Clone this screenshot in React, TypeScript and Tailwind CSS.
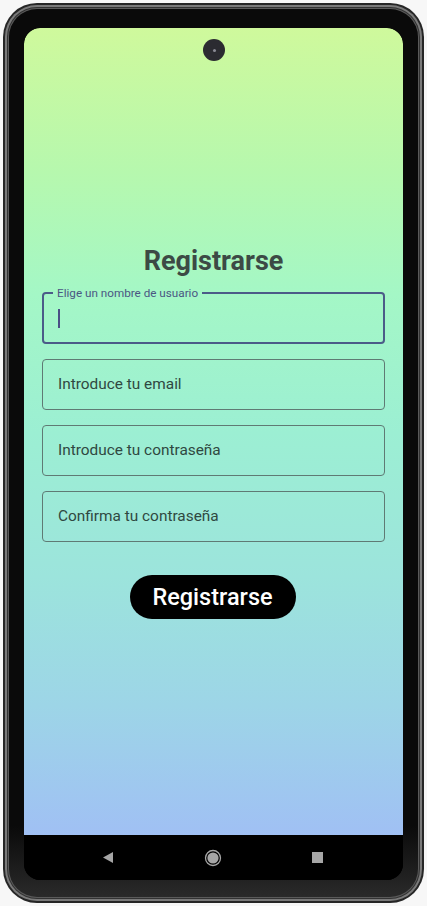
import React from "react";

export default function App() {
  return (
    <div className="w-[427px] h-[906px] bg-[#f7f7f7] p-[3px] overflow-hidden" style={{ fontFamily: "Roboto, 'Noto Sans', sans-serif" }}>
      {/* phone outer rim */}
      <div className="w-[421px] h-[900px] rounded-[34px] bg-[#262626] p-[2px]">
        <div className="w-full h-full rounded-[32px] bg-[#7a7a7a] p-[2px]">
          <div className="w-full h-full rounded-[30px] bg-[#333333] p-[1px]">
            <div className="w-full h-full rounded-[29px] bg-[#5a5a5a] p-[1px]">
              <div className="w-full h-full rounded-[28px] bg-[linear-gradient(180deg,#0a0a0a_0%,#0a0a0a_92%,#2a2a2a_100%)] pt-[19px] px-[15px] pb-[17px]">
                {/* screen */}
                <div className="w-[379px] h-[852px] rounded-[16px] overflow-hidden flex flex-col bg-black">
                  <div className="relative h-[807px] rounded-t-[16px] bg-[linear-gradient(180deg,#cff99c_0%,#b6f8ae_18%,#a4f7c6_33%,#9cefd3_50%,#9ce4dc_68%,#9dd5e7_84%,#a0c0f4_100%)] flex flex-col items-center pt-[217px] px-[18px]">
                    {/* camera */}
                    <div className="absolute top-[11px] left-[179px] w-[22px] h-[22px] rounded-full bg-[#2b2b31] flex items-center justify-center">
                      <div className="w-[3px] h-[3px] rounded-full bg-[#8a8a95]" />
                    </div>
                    <h1 className="text-[27px] leading-[32px] font-bold text-[#3c4a45]">Registrarse</h1>
                    <div className="w-full flex flex-col gap-[15px] mt-[10px]">
                      <fieldset className="h-[57px] border-2 border-[#4b5b88] rounded-[4px] px-[14px]">
                        <legend className="ml-[-5px] px-[4px] text-[11.7px] leading-[12px] text-[#4a5683]">Elige un nombre de usuario</legend>
                        <div className="h-[39px] flex items-center">
                          <div className="w-[2px] h-[19px] bg-[#4a4f85]" />
                        </div>
                      </fieldset>
                      <div className="h-[51px] border border-[#5f7a74] rounded-[4px] flex items-center px-[15px] text-[15.4px] text-[#2f4841]">Introduce tu email</div>
                      <div className="h-[51px] border border-[#5f7a74] rounded-[4px] flex items-center px-[15px] text-[15.4px] text-[#2f4841]">Introduce tu contraseña</div>
                      <div className="h-[51px] border border-[#5f7a74] rounded-[4px] flex items-center px-[15px] text-[15.4px] text-[#2f4841]">Confirma tu contraseña</div>
                    </div>
                    <button className="mt-[33px] ml-[-2px] w-[166px] h-[44px] rounded-full bg-black text-white text-[23.5px] font-medium leading-none pt-[2px]">Registrarse</button>
                  </div>
                  {/* nav bar */}
                  <div className="h-[45px] bg-black flex items-center">
                    <div className="w-full flex items-center justify-between pl-[78px] pr-[80px]">
                      <svg width="12" height="13" viewBox="0 0 12 13"><path d="M11 1 L1 6.5 L11 12 Z" fill="#a6a6a6" /></svg>
                      <svg width="18" height="18" viewBox="0 0 18 18"><circle cx="9" cy="9" r="7.5" fill="none" stroke="#a6a6a6" strokeWidth="1.3" /><circle cx="9" cy="9" r="5.6" fill="#a6a6a6" /></svg>
                      <div className="w-[11px] h-[11px] bg-[#a6a6a6]" />
                    </div>
                  </div>
                </div>
              </div>
            </div>
          </div>
        </div>
      </div>
    </div>
  );
}
